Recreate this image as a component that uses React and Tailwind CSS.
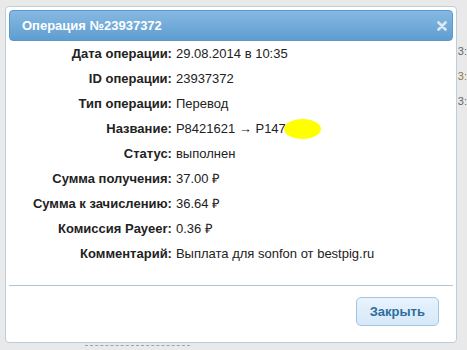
import React from "react";

const rows = [
  { label: "Дата операции:", value: "29.08.2014 в 10:35" },
  { label: "ID операции:", value: "23937372" },
  { label: "Тип операции:", value: "Перевод" },
  { label: "Название:", value: "P8421621 → P147", mark: true },
  { label: "Статус:", value: "выполнен" },
  { label: "Сумма получения:", value: "37.00 ₽" },
  { label: "Сумма к зачислению:", value: "36.64 ₽" },
  { label: "Комиссия Payeer:", value: "0.36 ₽" },
  { label: "Комментарий:", value: "Выплата для sonfon от bestpig.ru" },
];

const App = () => {
  return (
    <div
      className="w-[467px] h-[350px] overflow-hidden bg-[#e9e9e9] flex flex-col"
      style={{ fontFamily: '"Liberation Sans", Arial, sans-serif' }}
    >
      <div className="h-[6px]" />
      <div className="flex">
        <div className="w-[5px]" />
        <div className="w-[456px] h-[337px] bg-white border border-[#b9cfe0] rounded-[4px] p-[3px] flex flex-col">
          <div className="h-[31px] rounded-[4px] border border-[#5a98cd] bg-gradient-to-b from-[#86b9e2] to-[#5f9dd0] flex items-center justify-between pl-[12px] pr-[5px]">
            <span className="text-white font-bold text-[13px]">
              Операция №23937372
            </span>
            <svg width="10" height="10" viewBox="0 0 10 10">
              <path
                d="M1.5 1.5 L8.5 8.5 M8.5 1.5 L1.5 8.5"
                stroke="#dde8f2"
                strokeWidth="2.6"
                strokeLinecap="round"
              />
            </svg>
          </div>
          <div className="flex flex-col">
            {rows.map((row) => (
              <div key={row.label} className="h-[25px] flex items-center text-[13px] text-[#222]">
                <div className="w-[163px] text-right font-bold">{row.label}</div>
                <div className="pl-[4px] flex items-center">
                  {row.value}
                  {row.mark && (
                    <span className="inline-block w-[37px] h-[20px] -ml-[2px] rounded-[50%] bg-[#ffff00]" />
                  )}
                </div>
              </div>
            ))}
          </div>
          <div className="mt-[19px] border-t border-[#a9c7dc]" />
          <div className="flex justify-end pt-[11px] pr-[14px]">
            <button className="w-[83px] h-[29px] rounded-[5px] border border-[#a3c5e0] bg-gradient-to-b from-[#e8f3fd] to-[#d6e8f8] text-[#2e6e9e] font-bold text-[13px]">
              Закрыть
            </button>
          </div>
        </div>
        <div className="flex-1 flex flex-col pt-[40px] pl-[1px] text-[11px] text-[#666] leading-none">
          <div className="h-[25px]">3:</div>
          <div className="h-[25px] text-[#8a7a40]">3:</div>
          <div className="h-[25px]">3:</div>
        </div>
      </div>
      <div className="flex pt-[2px]">
        <div className="ml-[85px] w-[105px] border-t border-dashed border-[#9aa4ad]" />
      </div>
    </div>
  );
};

export default App;
